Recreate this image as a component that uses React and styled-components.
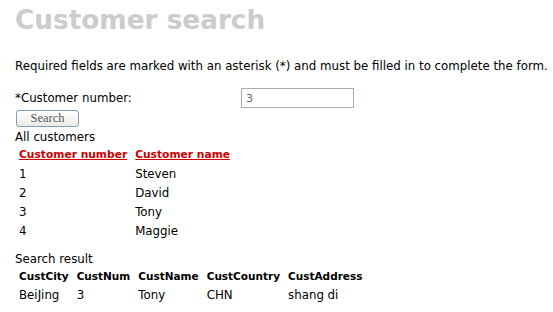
import styled, { createGlobalStyle } from "styled-components";

const Global = createGlobalStyle`
  body {
    margin: 0;
    background: #ffffff;
    font-family: "DejaVu Sans", Verdana, sans-serif;
    font-size: 11.8px;
    color: #000000;
  }
`

const Page = styled.div`
  padding: 5px 0 0 15px;
`

const Title = styled.h1`
  margin: 0;
  font-size: 26.3px;
  font-weight: bold;
  color: #cccccc;
  line-height: 30px;
`

const Note = styled.p`
  margin: 23px 0 14px 0;
  line-height: 16px;
  white-space: nowrap;
`

const FieldRow = styled.div`
  display: flex;
  align-items: center;
  height: 20px;
`

const Label = styled.label`
  width: 226px;
`

const Input = styled.input`
  width: 113px;
  height: 20px;
  box-sizing: border-box;
  border: 1px solid #a5acb5;
  padding: 0 4px;
  font-family: "DejaVu Sans", sans-serif;
  font-size: 11px;
  color: #666666;
  outline: none;
`

const Button = styled.button`
  display: block;
  margin: 2px 0 0 1px;
  width: 63px;
  height: 17px;
  padding: 0;
  border: 1px solid #7f9db9;
  border-radius: 3px;
  background: linear-gradient(#ffffff, #ecebe6);
  font-family: "Liberation Serif", serif;
  font-size: 12.5px;
  color: #555555;
`

const Caption = styled.div`
  line-height: 14px;
  margin-top: ${(p) => p.$top || 0}px;
`

const Table = styled.table`
  border-collapse: collapse;
  margin-top: ${(p) => p.$top || 0}px;

  th, td {
    padding: 0 4px;
    height: 19px;
    text-align: left;
    white-space: nowrap;
  }

  th {
    font-weight: bold;
    font-size: ${(p) => p.$head || 10.5}px;
  }
`

const SortLink = styled.a`
  color: #cc0000;
  font-weight: bold;
  text-decoration: underline;
`

const customers = [
  { num: 1, name: "Steven" },
  { num: 2, name: "David" },
  { num: 3, name: "Tony" },
  { num: 4, name: "Maggie" },
]

export default function App() {
  return (
    <Page>
      <Global />
      <Title>Customer search</Title>
      <Note>Required fields are marked with an asterisk (*) and must be filled in to complete the form.</Note>
      <FieldRow>
        <Label>*Customer number:</Label>
        <Input defaultValue="3" />
      </FieldRow>
      <Button>Search</Button>
      <Caption $top={3}>All customers</Caption>
      <Table $top={1} $head={10.7}>
        <thead>
          <tr>
            <th><SortLink href="#">Customer number</SortLink></th>
            <th><SortLink href="#">Customer name</SortLink></th>
          </tr>
        </thead>
        <tbody>
          {customers.map((c) => (
            <tr key={c.num}>
              <td>{c.num}</td>
              <td>{c.name}</td>
            </tr>
          ))}
        </tbody>
      </Table>
      <Caption $top={12}>Search result</Caption>
      <Table $head={10.5}>
        <thead>
          <tr>
            <th>CustCity</th>
            <th>CustNum</th>
            <th>CustName</th>
            <th>CustCountry</th>
            <th>CustAddress</th>
          </tr>
        </thead>
        <tbody>
          <tr>
            <td>BeiJing</td>
            <td>3</td>
            <td>Tony</td>
            <td>CHN</td>
            <td>shang di</td>
          </tr>
        </tbody>
      </Table>
    </Page>
  )
}
